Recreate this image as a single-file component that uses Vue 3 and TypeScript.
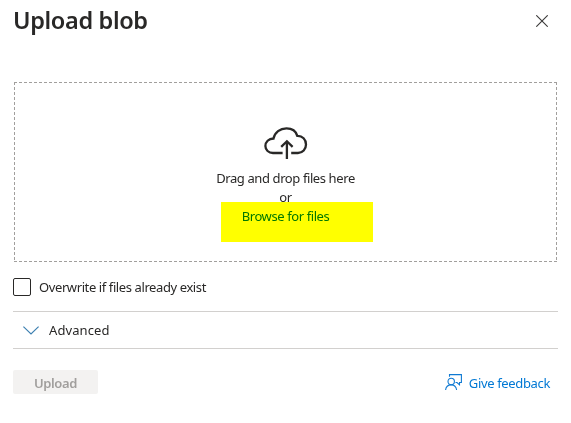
<script setup lang="ts">
import { ref } from 'vue'

const overwrite = ref(false)
</script>

<template>
  <section class="panel">
    <header class="head">
      <h1 class="title">Upload blob</h1>
      <button class="close" aria-label="Close">
        <svg width="12" height="12" viewBox="0 0 12 12">
          <path d="M.3.3 11.7 11.7M11.7.3.3 11.7" fill="none" stroke="#3b3a39" stroke-width="1.1" />
        </svg>
      </button>
    </header>

    <div class="drop">
      <svg class="outline" width="543" height="180" viewBox="0 0 543 180" fill="none" stroke="#a19f9d" stroke-dasharray="3 2">
        <path d="M0 .5H543M0 179.5H543M.5 0V180M542.5 0V180" />
      </svg>
      <svg class="cloud" width="44" height="34" viewBox="0 0 44 34" fill="none" stroke="#292827" stroke-width="2.3">
        <path d="M18.600 26H9C4.600 26 1.400 23 1.400 19S4.600 11.500 9.500 11.500C10.800 5.400 16 1.400 22.500 1.400C28 1.400 32 4.200 33.300 8.900C38.500 8.700 42 12.500 42 17.400S38.600 26 34 26H27.200" />
        <path d="M22.900 32V14.500M17.200 19.900 22.900 14.300 28.600 19.900" />
      </svg>
      <span class="line">Drag and drop files here</span>
      <span class="line">or</span>
      <span class="line browse">Browse for files</span>
      <span class="marker"></span>
    </div>

    <label class="check">
      <input v-model="overwrite" type="checkbox" class="box" />
      <span class="check-text">Overwrite if files already exist</span>
    </label>

    <div class="advanced">
      <svg width="16" height="9" viewBox="0 0 16 9">
        <path d="M.4.6 8 8 15.600.6" fill="none" stroke="#3c7fb0" stroke-width="1.2" />
      </svg>
      <span class="advanced-text">Advanced</span>
    </div>

    <footer class="foot">
      <button class="upload" disabled><span>Upload</span></button>
      <a class="feedback">
        <svg width="17" height="17" viewBox="0 0 17 17" fill="none" stroke="#0f7ad3" stroke-width="1.100">
          <path d="M4.500 2.800V.6H16.400V8.500H14.500V10.800L12 8.500H10.500" />
          <circle cx="6.200" cy="7.500" r="3.200" />
          <path d="M.6 16C.9 12.800 3.200 10.900 6.200 10.900S11.200 12.800 11.600 16" />
        </svg>
        <span class="feedback-text">Give feedback</span>
      </a>
    </footer>
  </section>
</template>

<style>
body {
  background: #fff;
}
</style>

<style scoped>
.panel {
  box-sizing: border-box;
  width: 571px;
  height: 423px;
  padding: 0 13px;
  font-family: 'Noto Sans', 'Open Sans', sans-serif;
  font-size: 13px;
  color: #292827;
}
.head {
  display: flex;
  justify-content: space-between;
  height: 82px;
}
.title {
  margin: 4px 0 0;
  font-size: 23.5px;
  line-height: 32px;
  font-weight: 600;
  letter-spacing: -0.35px;
}
.close {
  display: flex;
  align-self: flex-start;
  margin: 15px 10px 0 0;
  padding: 0;
  border: 0;
  background: none;
}
.drop {
  position: relative;
  box-sizing: border-box;
  height: 180px;
  margin: 0 1px;
  padding-top: 45px;
  display: flex;
  flex-direction: column;
  align-items: center;
}
.outline {
  position: absolute;
  inset: 0;
}
.cloud {
  margin-bottom: 8px;
  flex: none;
}
.line {
  line-height: 19px;
  letter-spacing: -0.4px;
  white-space: nowrap;
}
.browse {
  color: #0078d4;
}
.marker {
  position: absolute;
  left: 207px;
  top: 120px;
  width: 152px;
  height: 40px;
  background: #ff0;
  mix-blend-mode: multiply;
}
.check {
  display: flex;
  align-items: center;
  gap: 8px;
  height: 18px;
  margin-top: 16px;
}
.box {
  appearance: none;
  box-sizing: border-box;
  width: 18px;
  height: 18px;
  margin: 0;
  border: 1px solid #292827;
  border-radius: 2px;
}
.check-text {
  letter-spacing: -0.4px;
}
.advanced {
  box-sizing: border-box;
  display: flex;
  align-items: center;
  gap: 10px;
  height: 38px;
  margin-top: 15px;
  padding-left: 10px;
  border: solid #d2d0ce;
  border-width: 1px 0;
}
.advanced-text {
  letter-spacing: 0.1px;
}
.foot {
  display: flex;
  justify-content: space-between;
  margin-top: 21px;
}
.upload {
  width: 85px;
  height: 24px;
  padding: 2px 0 0;
  border: 0;
  border-radius: 2px;
  background: #f3f2f1;
  color: #a19f9d;
  font: 600 13px/20px 'Noto Sans', 'Open Sans', sans-serif;
  letter-spacing: -0.4px;
}
.feedback {
  display: flex;
  align-items: center;
  height: 24px;
  gap: 7px;
  margin-right: 8px;
  color: #0078d4;
}
.feedback-text {
  padding-top: 2px;
  letter-spacing: -0.35px;
}
</style>
